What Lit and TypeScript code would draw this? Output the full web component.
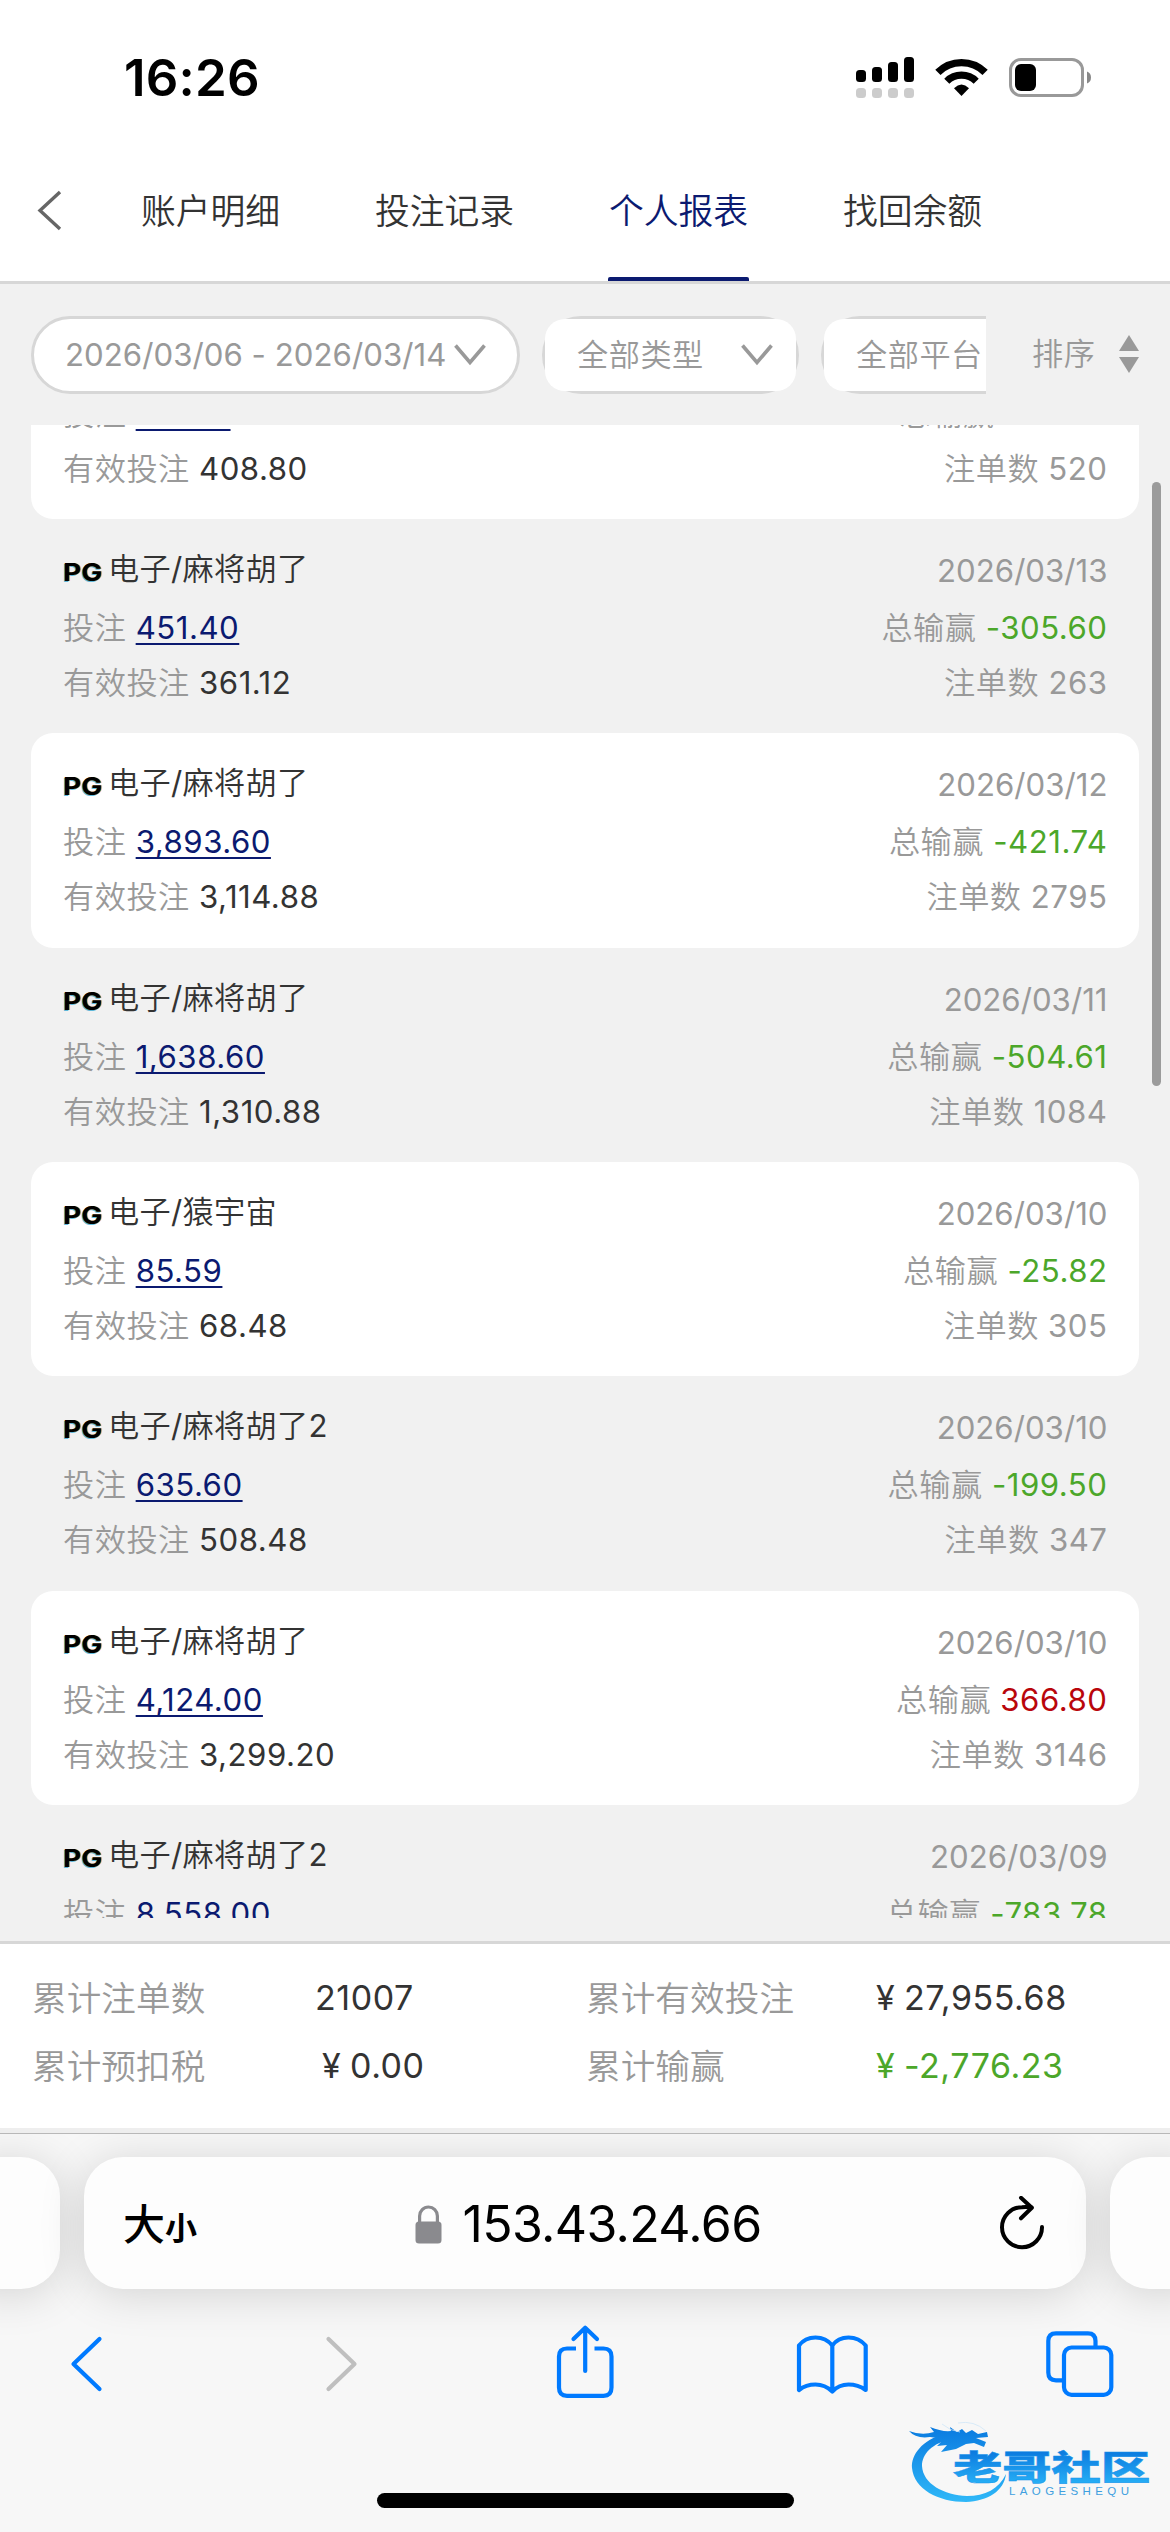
import { LitElement, html, svg, css, nothing } from "lit";
import { customElement, property } from "lit/decorators.js";

interface Entry {
  game?: string;
  date?: string;
  bet: string;
  valid?: string;
  result: string;
  count?: string;
}

const ENTRIES: Entry[] = [
  { bet: "511.00", valid: "408.80", result: "-96.40", count: "520" },
  { game: "电子/麻将胡了", date: "2026/03/13", bet: "451.40", valid: "361.12", result: "-305.60", count: "263" },
  { game: "电子/麻将胡了", date: "2026/03/12", bet: "3,893.60", valid: "3,114.88", result: "-421.74", count: "2795" },
  { game: "电子/麻将胡了", date: "2026/03/11", bet: "1,638.60", valid: "1,310.88", result: "-504.61", count: "1084" },
  { game: "电子/猿宇宙", date: "2026/03/10", bet: "85.59", valid: "68.48", result: "-25.82", count: "305" },
  { game: "电子/麻将胡了2", date: "2026/03/10", bet: "635.60", valid: "508.48", result: "-199.50", count: "347" },
  { game: "电子/麻将胡了", date: "2026/03/10", bet: "4,124.00", valid: "3,299.20", result: "366.80", count: "3146" },
  { game: "电子/麻将胡了2", date: "2026/03/09", bet: "8,558.00", result: "-783.78" },
];

@customElement("status-bar")
export class StatusBar extends LitElement {
  static styles = css`
    :host { display: flex; justify-content: space-between; height: 142px; box-sizing: border-box; padding: 48px 76px 0 124px; }
    .time { font-size: 51px; line-height: 60px; font-weight: 600; color: #000; letter-spacing: 0.2px; }
    .icons { display: block; width: 240px; height: 50px; margin-top: 4px; }
  `;
  render() {
    const tops = [18, 15, 10, 5];
    return html`
      <span class="time">16:26</span>
      <svg class="icons" viewBox="854 52 240 50">
        ${tops.map((t, i) => svg`
          <rect x=${856 + i * 16} y=${52 + t} width="10" height=${30 - t} rx="3.5" fill="#000"></rect>
          <rect x=${856 + i * 16} y="88" width="10" height="10" rx="3.5" fill="#ccc"></rect>`)}
        <g fill="none" stroke="#000">
          <path d="M937.9 72.4A33.3 33.3 0 0 1 985.1 72.4" stroke-width="7.4"></path>
          <path d="M946.8 81.3A20.8 20.8 0 0 1 976.2 81.3" stroke-width="7.2"></path>
        </g>
        <path d="M961.5 96L954 88.2Q961.5 80.8 969 88.2Z" fill="#000"></path>
        <rect x="1010.5" y="59.5" width="72" height="36" rx="10.5" fill="none" stroke="#999" stroke-width="3"></rect>
        <rect x="1015" y="64" width="21" height="27" rx="6" fill="#000"></rect>
        <path d="M1087 71.5Q1091 73 1091 77.5T1087 83.5Z" fill="#888"></path>
      </svg>
    `;
  }
}

@customElement("report-row")
export class ReportRow extends LitElement {
  @property({ attribute: false }) entry!: Entry;

  static styles = css`
    :host { display: grid; grid-template-columns: 1fr auto; grid-template-rows: 61px 55px 55px; box-sizing: border-box; height: 214.35px; padding: 20px 31.5px 0 32px; border-radius: 22px; flex: none; color: #999; }
    .cell { line-height: 56px; white-space: pre; }
    .right { text-align: right; }
    .title { display: flex; line-height: 60px; color: #333; letter-spacing: 0.3px; }
    .brand { display: inline-block; width: 45px; font-size: 24px; line-height: 67px; font-weight: 700; color: #000; }
    .mark { display: inline-block; transform: scaleX(1.17); transform-origin: 0 50%; letter-spacing: 0; text-shadow: 0.8px -0.5px 0 #f90a, -0.8px 0.5px 0 #19ca; }
    .date { line-height: 64px; letter-spacing: 0; }
    .num { color: #333; }
    .bet { color: #0b1a70; text-decoration: underline; text-decoration-thickness: 2px; text-underline-offset: 4px; text-decoration-skip-ink: none; }
    .loss { color: #4ca72a; }
    .win { color: #b9060b; }
  `;
  render() {
    const e = this.entry;
    return html`
      <div class="title">${e.game ? html`<span class="brand"><span class="mark">PG</span></span><span>${e.game}</span>` : nothing}</div>
      <div class="cell right date">${e.date ?? nothing}</div>
      <div class="cell">投注 <span class="bet">${e.bet}</span></div>
      <div class="cell right">总输赢 <span class=${e.result.startsWith("-") ? "loss" : "win"}>${e.result}</span></div>
      ${e.valid ? html`<div class="cell">有效投注 <span class="num">${e.valid}</span></div>
      <div class="cell right">注单数 ${e.count}</div>` : nothing}
    `;
  }
}

@customElement("browser-bar")
export class BrowserBar extends LitElement {
  static styles = css`
    :host { display: flex; flex-direction: column; position: relative; height: 399px; box-sizing: border-box; border-top: 1px solid #b8b8b8; background: #f7f7f7; overflow: hidden; letter-spacing: 0; }
    .tabs { display: flex; gap: 24px; padding-top: 23px; margin: 0 -40px; }
    .card { height: 132px; border-radius: 39px; background: #fdfdfd; box-shadow: 0 5px 46px rgba(0, 0, 0, 0.15); }
    .peek { width: 100px; }
    .main { flex: 1; display: flex; align-items: center; justify-content: space-between; box-sizing: border-box; padding: 2px 40px 0; color: #000; }
    .size { display: flex; align-items: baseline; width: 130px; margin-left: -1px; font-family: "Noto Sans CJK SC", sans-serif; font-weight: 500; font-size: 42px; line-height: 60px; }
    .small { font-size: 32px; font-weight: 700; }
    .host { display: flex; align-items: center; gap: 20px; padding-left: 8px; font-size: 50px; line-height: 60px; letter-spacing: -0.65px; }
    .end { width: 130px; display: flex; justify-content: flex-end; }
    .tools { display: block; width: 1170px; height: 90px; margin-top: 32px; }
    .home { width: 417px; height: 15px; border-radius: 8px; background: #000; margin: 82px auto 0; }
    .logo { position: absolute; right: 12px; bottom: 22px; width: 256px; height: 94px; }
    svg { display: block; }
  `;
  render() {
    return html`
      <div class="tabs">
        <div class="card peek"></div>
        <div class="card main">
          <span class="size">大<span class="small">小</span></span>
          <span class="host">
            <svg width="27" height="39" viewBox="0 0 27 39"><path d="M4.6 18V11A8.9 9 0 0 1 22.4 11V18" fill="none" stroke="#8a8a8e" stroke-width="3.2"></path><rect x="0.5" y="16.5" width="26" height="22" rx="3.5" fill="#8a8a8e"></rect></svg>
            <span>153.43.24.66</span>
          </span>
          <span class="end">
            <svg width="48" height="56" viewBox="996 2195 48 56" fill="none" stroke="#000" stroke-width="4" stroke-linecap="round" stroke-linejoin="round"><path d="M1040 2226A20 20 0 1 1 1020 2206.2Q1025 2205.8 1029.5 2206.5"></path><path d="M1019 2196.8L1029.8 2206.8L1019 2217.3"></path></svg>
          </span>
        </div>
        <div class="card peek"></div>
      </div>
      <svg class="tools" viewBox="0 2321 1170 90" fill="none" stroke="#007aff" stroke-width="4.2" stroke-linecap="round" stroke-linejoin="round">
        <path d="M99.5 2339L73.5 2364L99.5 2389"></path>
        <path d="M328.5 2339L354.5 2364L328.5 2389" stroke="#bfbfbf"></path>
        <path d="M576 2348.5H567Q559 2348.5 559 2356.5V2387.5Q559 2395.8 567 2395.8H603.5Q611.5 2395.8 611.5 2387.5V2356.5Q611.5 2348.5 603.5 2348.5H594.5" stroke-linecap="butt"></path>
        <path d="M585.2 2371V2328.5M573.5 2339L585.2 2327.8L597 2339"></path>
        <path d="M799 2390V2345.5Q805 2337.5 815.5 2337.5T832.3 2345.5Q838 2337.5 848.5 2337.5T865.7 2345.5V2390Q858 2384.5 848.5 2384.5T832.3 2391.5Q825 2384.5 815.5 2384.5T799 2390ZM832.3 2345.5V2391"></path>
        <path d="M1095.5 2346V2341Q1095.5 2333.3 1088 2333.3H1056Q1048.3 2333.3 1048.3 2341V2372.5Q1048.3 2380.3 1056 2380.3H1062" stroke-linecap="butt"></path>
        <rect x="1064" y="2347.5" width="47.3" height="47.3" rx="7.5"></rect>
      </svg>
      <div class="home"></div>
      <svg class="logo" viewBox="902 2416 256 94">
        <defs>
          <linearGradient id="ring" gradientUnits="userSpaceOnUse" x1="0" y1="2428" x2="0" y2="2502"><stop offset="0" stop-color="#0a7be0"></stop><stop offset="1" stop-color="#2fb8f8"></stop></linearGradient>
          <linearGradient id="ink" x1="0" y1="0.2" x2="0" y2="1"><stop offset="0" stop-color="#0a78de"></stop><stop offset="1" stop-color="#2cb9fa"></stop></linearGradient>
        </defs>
        <path d="M944 2434C922 2440 911 2455 912 2468C914 2489 938 2502 966 2502C988 2501 1004 2491 1006 2474C999 2489 985 2496 967 2496C944 2495 923 2484 922 2466C922 2454 932 2443 952 2439Z" fill="url(#ring)"></path>
        <path d="M909 2431Q922 2436 934 2432L930 2427Q942 2432 951 2431L950 2427L957 2432L962 2429L966 2433L972 2430L978 2434L987 2432L988 2437L976 2438L986 2442L984 2447L974 2443L966 2444L956 2449L941 2452L947 2445L937 2446L944 2439L930 2437Q916 2439 909 2431Z" fill="url(#ring)"></path>
        <path d="M958 2423Q974 2420 986 2431M942 2424Q950 2431 960 2432" fill="none" stroke="#cfe6f8" stroke-width="0.8"></path>
        <g fill="url(#ink)" font-family="Noto Sans CJK SC, sans-serif" font-weight="900">
          <text transform="translate(953 2480) scale(1.43 1)" font-size="34.5" stroke="#1694ea" stroke-width="0.5">老哥社区</text>
        </g>
        <text x="1009" y="2494.5" font-family="Liberation Sans, sans-serif" font-size="11.5" fill="#3f9fe0" textLength="120">LAOGESHEQU</text>
      </svg>
    `;
  }
}

@customElement("app-root")
export class AppRoot extends LitElement {
  static styles = css`
    :host { display: flex; flex-direction: column; position: relative; width: 1170px; height: 2532px; overflow: hidden; background: #f1f1f1; font-family: "Inter", "Noto Sans CJK SC DemiLight", "Noto Sans CJK SC", sans-serif; font-size: 31.2px; letter-spacing: 0.5px; color: #333; }
    .nav { display: flex; align-items: stretch; height: 139px; padding-left: 36px; }
    .head { background: #fff; border-bottom: 3px solid #d7d7d7; }
    .back { width: 104px; padding-top: 48px; }
    .tab { position: relative; width: 141px; margin-right: 93px; text-align: center; font-size: 34.8px; line-height: 139px; letter-spacing: 0; white-space: nowrap; }
    .active { color: #0b1a70; }
    .active::after { content: ""; position: absolute; left: 0; right: 0; bottom: 0; height: 4.5px; border-radius: 2px 2px 0 0; background: #0b1a70; }
    .filters { display: flex; align-items: flex-start; height: 141px; box-sizing: border-box; padding: 32px 31px 0; color: #999; line-height: 72px; }
    .scroll { display: flex; gap: 22px; width: 955px; overflow: hidden; }
    .pill { flex: none; box-sizing: border-box; height: 78px; border: 3px solid #d7d7d7; border-radius: 39px; white-space: nowrap; }
    .range { display: flex; align-items: center; gap: 8px; width: 489px; padding-left: 31px; background: #fff; letter-spacing: 0.03px; }
    .choice { width: 257px; }
    .inner { display: flex; align-items: center; justify-content: space-between; height: 72px; padding: 0 23px 0 32px; border-radius: 20px; background: #fff; }
    .sort { display: flex; align-items: center; justify-content: space-between; width: 107px; margin-left: 46px; height: 76px; }
    .list { display: flex; flex-direction: column; justify-content: flex-start; height: 1493px; margin: 0 31px; overflow: hidden; }
    .first { margin-top: -120.3px; }
    .card { background: #fff; }
    .thumb { position: absolute; right: 9px; top: 482px; width: 9px; height: 604px; border-radius: 5px; background: #9b9b9b; }
    .totals { display: grid; grid-template-columns: 283px 271px 290px auto; grid-template-rows: 68px 68px; justify-content: start; box-sizing: border-box; height: 187px; margin-top: 23px; padding: 20px 0 0 32px; border-top: 3px solid #d7d7d7; background: #fff; font-size: 34.6px; line-height: 68px; letter-spacing: 0.1px; white-space: nowrap; }
    .label { color: #999; }
    .value { font-size: 34px; letter-spacing: 0.55px; }
    .yen { display: inline-block; width: 28px; }
    .tax { padding-left: 7px; }
    .green { color: #4ca72a; }
    .strip { height: 5px; background: #eee; }
    svg { display: block; }
  `;

  private chevron() {
    return html`<svg width="32" height="22" viewBox="0 0 32 22"><path d="M1.5 1.5L16 18.5L30.5 1.5" fill="none" stroke="#999" stroke-width="3.6"></path></svg>`;
  }

  render() {
    return html`
      <div class="head">
        <status-bar></status-bar>
        <nav class="nav">
          <span class="back"><svg width="27" height="41" viewBox="0 0 27 41"><path d="M24 2L4 20.5L24 39" fill="none" stroke="#666" stroke-width="3.4"></path></svg></span>
          ${["账户明细", "投注记录", "个人报表", "找回余额"].map((t, i) => html`<span class="tab ${i === 2 ? "active" : ""}">${t}</span>`)}
        </nav>
      </div>
      <div class="filters">
        <div class="scroll">
          <div class="pill range"><span>2026/03/06 - 2026/03/14</span>${this.chevron()}</div>
          ${["全部类型", "全部平台"].map((t, i) => html`<div class="pill choice"><div class="inner"><span>${t}</span>${i === 0 ? this.chevron() : nothing}</div></div>`)}
        </div>
        <div class="sort"><span>排序</span><svg width="20" height="38" viewBox="0 0 20 38" fill="#999"><path d="M10 0L20 16H0ZM10 38L20 22H0Z"></path></svg></div>
      </div>
      <div class="list">
        ${ENTRIES.map((e, i) => html`<report-row class="${i === 0 ? "first" : ""} ${i % 2 === 0 ? "card" : ""}" .entry=${e}></report-row>`)}
      </div>
      <div class="thumb"></div>
      <div class="totals">
        <span class="label">累计注单数</span><span class="value">21007</span>
        <span class="label">累计有效投注</span><span class="value"><span class="yen">¥</span>27,955.68</span>
        <span class="label">累计预扣税</span><span class="value tax"><span class="yen">¥</span>0.00</span>
        <span class="label">累计输赢</span><span class="value green"><span class="yen">¥</span>-2,776.23</span>
      </div>
      <div class="strip"></div>
      <browser-bar></browser-bar>
    `;
  }
}
